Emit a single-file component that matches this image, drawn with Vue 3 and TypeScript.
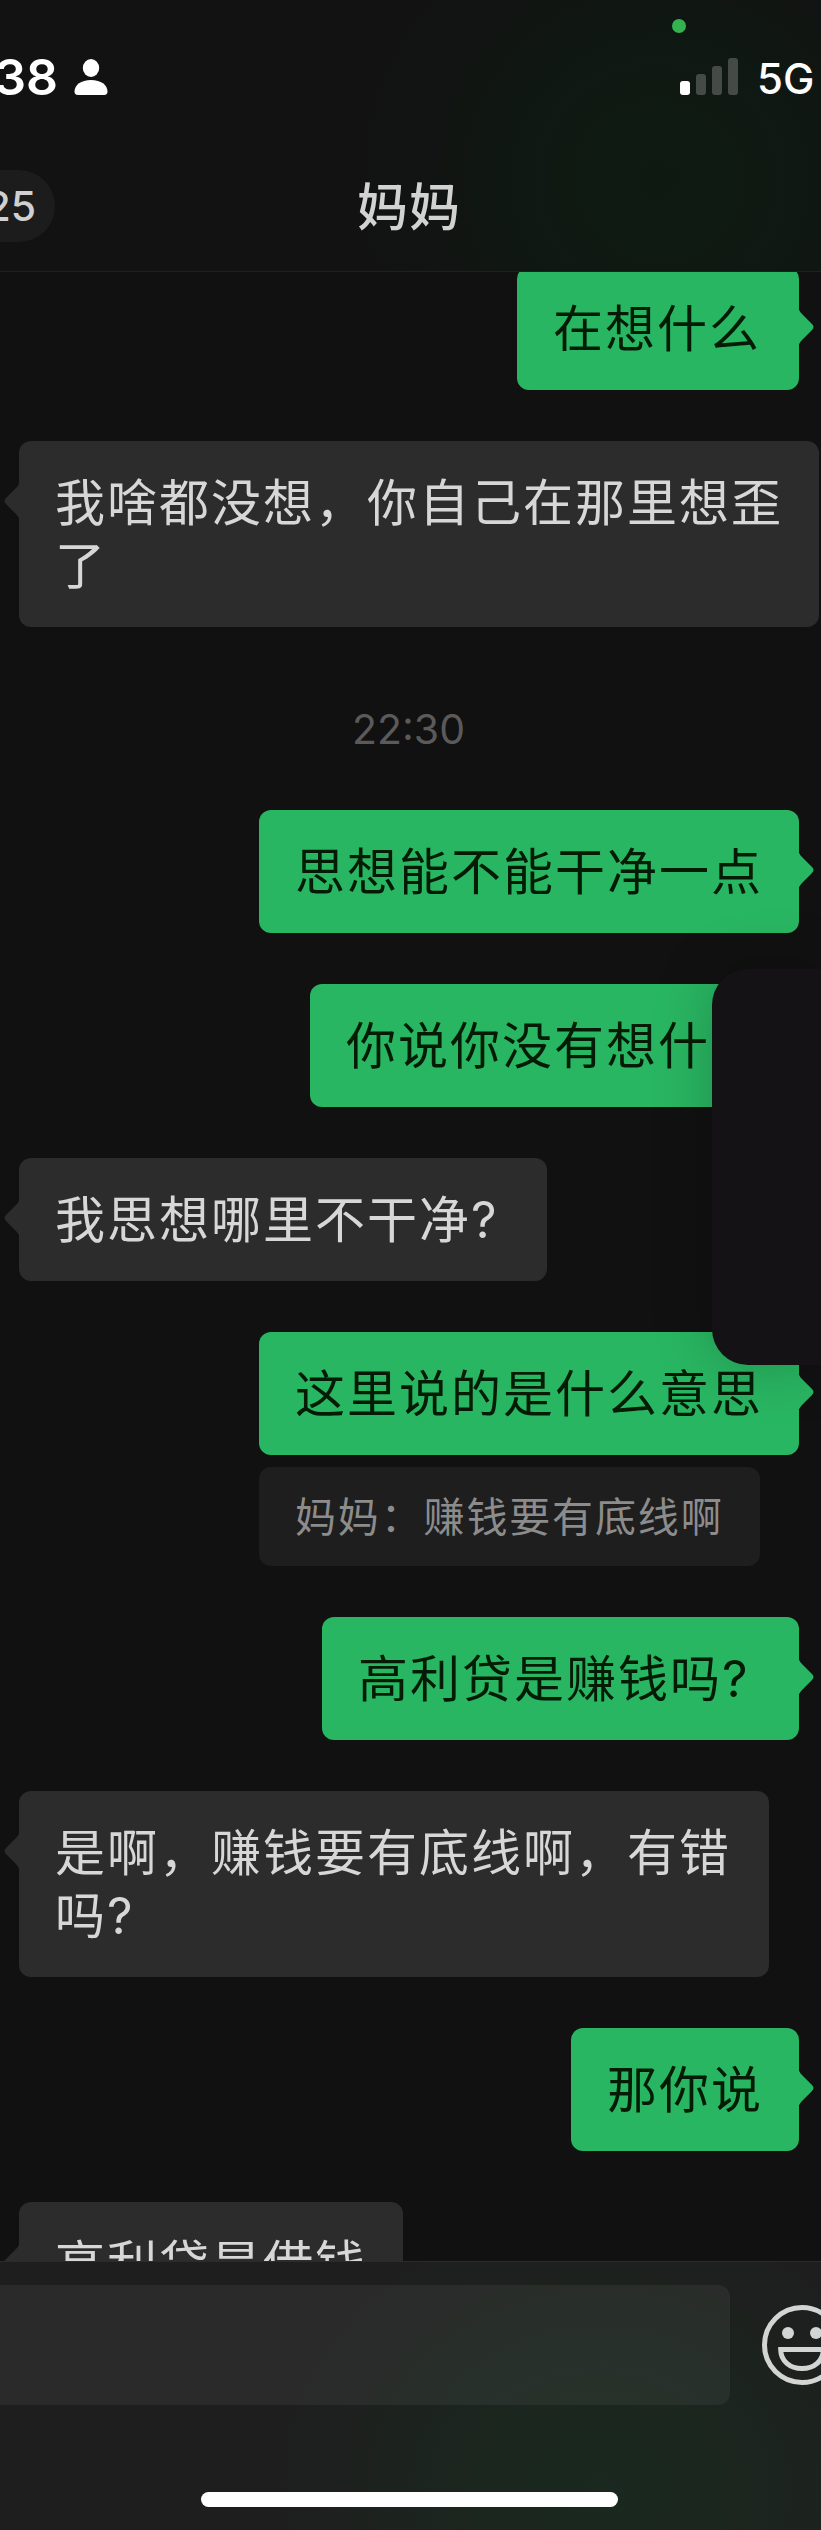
<script setup lang="ts">
interface Message {
  side: 'in' | 'out'
  lines: string[]
  question?: boolean
  quote?: string
  time?: string
  width?: number
}

const messages: Message[] = [
  { side: 'out', lines: ['在想什么'], width: 282 },
  { side: 'in', lines: ['我啥都没想，你自己在那里想歪', '了'] },
  { side: 'out', lines: ['思想能不能干净一点'], time: '22:30' },
  { side: 'out', lines: ['你说你没有想什'], width: 489 },
  { side: 'in', lines: ['我思想哪里不干净'], question: true, width: 528 },
  { side: 'out', lines: ['这里说的是什么意思'], quote: '妈妈：赚钱要有底线啊' },
  { side: 'out', lines: ['高利贷是赚钱吗'], question: true },
  { side: 'in', lines: ['是啊，赚钱要有底线啊，有错', '吗'], question: true, width: 750 },
  { side: 'out', lines: ['那你说'] },
  { side: 'in', lines: ['高利贷是借钱'] },
]
</script>

<template>
  <div class="screen">
    <header class="header">
      <div class="status">
        <span class="clock">38</span>
        <svg class="person" width="34" height="38" viewBox="0 0 34 38">
          <ellipse cx="17" cy="10" rx="8.2" ry="9" fill="#fff" />
          <path d="M4 37C1.400 37 .5 35.500 .5 33.500C.5 27 7 22 17 22C27 22 33.500 27 33.500 33.500C33.500 35.500 32.600 37 30 37Z" fill="#fff" />
        </svg>
        <svg class="signal" width="58" height="38" viewBox="0 0 58 38">
          <rect x="0" y="23" width="10" height="14" rx="3" fill="#fff" />
          <rect x="16" y="16" width="10" height="21" rx="3" fill="#454a47" />
          <rect x="32" y="8" width="10" height="29" rx="3" fill="#454a47" />
          <rect x="48" y="0" width="10" height="37" rx="3" fill="#454a47" />
        </svg>
        <span class="network">5G</span>
        <i class="dot"></i>
      </div>
      <div class="nav">
        <span class="back">25</span>
        <h1 class="title">妈妈</h1>
      </div>
    </header>

    <main class="chat">
      <div class="list">
        <template v-for="(m, i) in messages" :key="i">
          <div v-if="m.time" class="time">{{ m.time }}</div>
          <div class="row" :class="m.side">
            <div class="stack">
              <div class="bubble" :style="m.width ? { width: m.width + 'px' } : undefined">
                <div v-for="(line, n) in m.lines" :key="n" class="line">{{ line }}<span
                  v-if="m.question && n === m.lines.length - 1" class="mark">?</span></div>
                <svg class="tail" width="17" height="36" viewBox="0 0 17 36">
                  <path d="M0 0L1.500 1.500Q2 3 4 5L14 15Q17 18 14 21L4 31Q2 33 1.500 34.500L0 36Z" />
                </svg>
              </div>
              <div v-if="m.quote" class="quote">{{ m.quote }}</div>
            </div>
          </div>
        </template>
      </div>
    </main>

    <footer class="footer">
      <div class="composer">
        <div class="input"></div>
        <svg class="emoji" width="80" height="80" viewBox="0 0 80 80">
          <g fill="none" stroke="#d2d5d2" stroke-width="5">
            <circle cx="40" cy="40" r="37.500" />
            <path d="M18.700 44.500H61.300C61.300 56 52 63.500 40 63.500C28 63.500 18.700 56 18.700 44.500Z" />
          </g>
          <circle cx="26" cy="28" r="6" fill="#d2d5d2" />
          <circle cx="54" cy="28" r="6" fill="#d2d5d2" />
        </svg>
      </div>
      <div class="home"></div>
    </footer>

    <div class="panel"></div>
  </div>
</template>

<style>
body {
  margin: 0;
  background: #111;
}
</style>

<style scoped>
.screen {
  position: relative;
  display: flex;
  flex-direction: column;
  width: 821px;
  height: 2530px;
  overflow: hidden;
  background: #111111;
  font-family: "Noto Sans CJK SC", sans-serif;
}

.header {
  box-sizing: border-box;
  flex: none;
  height: 272px;
  border-bottom: 1px solid #1f2120;
  background: radial-gradient(ellipse 300px 290px at 660px 180px, #0e1a11 0%, #0f1912 35%, #121212 100%);
}

.status {
  position: relative;
  display: flex;
  align-items: flex-start;
  height: 170px;
  font-family: Inter, sans-serif;
  color: #fff;
}

.clock {
  width: 58px;
  margin-top: 46px;
  font-size: 50px;
  line-height: 62px;
  font-weight: 600;
  display: flex;
  justify-content: flex-end;
}

.person {
  margin: 58px 0 0 16px;
}

.signal {
  margin: 58px 0 0 572px;
}

.network {
  margin: 54px 0 0 19px;
  font-size: 42px;
  line-height: 50px;
  font-weight: 500;
}

.dot {
  position: absolute;
  left: 672px;
  top: 19px;
  width: 14px;
  height: 14px;
  border-radius: 50%;
  background: #32b350;
}

.nav {
  display: grid;
  grid-template-columns: 55px 708px 58px;
  height: 72px;
}

.back {
  display: flex;
  align-items: center;
  justify-content: flex-end;
  padding-right: 19px;
  border-radius: 0 36px 36px 0;
  background: #1c1c1c;
  color: #d0d0d0;
  font: 500 41px/72px Inter, sans-serif;
}

.title {
  margin: 0;
  text-align: center;
  font-size: 51px;
  line-height: 69px;
  font-weight: 500;
  letter-spacing: 1px;
  color: #d2d2d2;
}

.chat {
  flex: 1;
  min-height: 0;
  overflow: hidden;
}

.list {
  display: flex;
  flex-direction: column;
  gap: 51px;
  margin-top: -5px;
}

.row {
  display: flex;
  padding: 0 22px 0 19px;
}

.in {
  padding-right: 0;
}

.out {
  justify-content: flex-end;
}

.stack {
  display: flex;
  flex-direction: column;
  align-items: flex-start;
}

.bubble {
  position: relative;
  box-sizing: border-box;
  padding: 27px 36px 33px;
  border-radius: 12px;
  font-size: 50px;
  letter-spacing: 2px;
  line-height: 63px;
  white-space: nowrap;
}

.in .bubble {
  background: #2c2c2c;
  color: #d7d7d7;
}

.out .bubble {
  background: #29b662;
  color: #041c05;
}

.line {
  height: 63px;
}

.mark {
  display: inline-block;
  width: 41px;
  font-family: Inter, sans-serif;
  letter-spacing: 0;
}

.tail {
  position: absolute;
  top: 42px;
  left: calc(100% - 1px);
  fill: #29b662;
}

.in .tail {
  left: -16px;
  transform: scaleX(-1);
  fill: #2c2c2c;
}

.quote {
  width: 429px;
  margin-top: 12px;
  padding: 0 36px 5px;
  border-radius: 12px;
  background: #1e1e1e;
  color: #8c8c8c;
  font-size: 41px;
  letter-spacing: 1.85px;
  line-height: 94px;
  white-space: nowrap;
}

.time {
  height: 81px;
  padding-right: 4px;
  text-align: center;
  font: 400 41px/103px Inter, sans-serif;
  color: #5a5a5a;
}

.footer {
  box-sizing: border-box;
  flex: none;
  display: flex;
  flex-direction: column;
  align-items: center;
  height: 269px;
  border-top: 1px solid #2b2b2b;
  background: radial-gradient(ellipse 320px 280px at 600px 230px, #1a281e 0%, #1b261e 40%, #1e1e1e 100%);
}

.composer {
  display: flex;
  align-items: center;
  align-self: flex-start;
  gap: 32px;
  margin-top: 23px;
}

.input {
  width: 730px;
  height: 120px;
  border-radius: 0 12px 12px 0;
  background: rgba(255, 255, 255, 0.055);
}

.emoji {
  flex: none;
}

.home {
  width: 417px;
  height: 15px;
  margin: 87px 2px 0 0;
  border-radius: 8px;
  background: #fff;
}

.panel {
  position: absolute;
  left: 712px;
  top: 969px;
  width: 109px;
  height: 396px;
  border-radius: 36px 0 0 36px;
  background: #141215;
  box-shadow: 0 0 60px rgba(0, 0, 0, 0.22);
}
</style>
